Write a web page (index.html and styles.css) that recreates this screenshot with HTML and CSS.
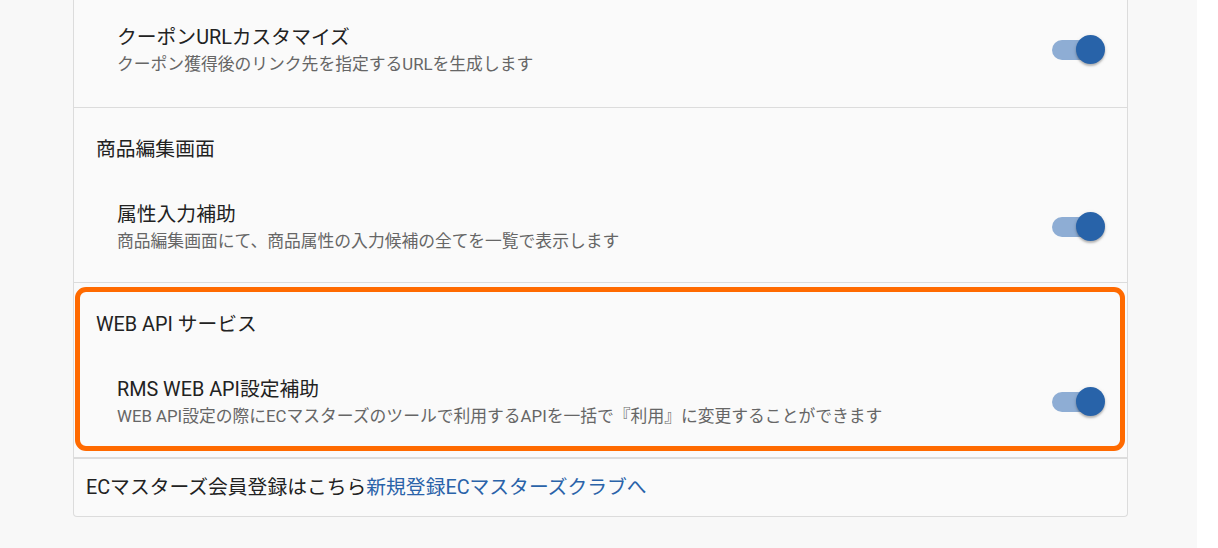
FILE: index.html
```html
<!DOCTYPE html>
<html lang="ja">
<head>
<meta charset="utf-8">
<title>設定</title>
<link rel="stylesheet" href="styles.css">
</head>
<body>
<div class="page">
  <main class="main">
    <div class="card">
      <section class="section section-first">
        <div class="item">
          <div class="item-text">
            <div class="item-title">クーポンURLカスタマイズ</div>
            <div class="item-desc">クーポン獲得後のリンク先を指定するURLを生成します</div>
          </div>
          <span class="toggle"><span class="track"></span><span class="knob"></span></span>
        </div>
      </section>
      <section class="section">
        <h2 class="section-title">商品編集画面</h2>
        <div class="item">
          <div class="item-text">
            <div class="item-title">属性入力補助</div>
            <div class="item-desc">商品編集画面にて、商品属性の入力候補の全てを一覧で表示します</div>
          </div>
          <span class="toggle"><span class="track"></span><span class="knob"></span></span>
        </div>
      </section>
      <section class="section highlight">
        <h2 class="section-title">WEB API サービス</h2>
        <div class="item">
          <div class="item-text">
            <div class="item-title">RMS WEB API設定補助</div>
            <div class="item-desc">WEB API設定の際にECマスターズのツールで利用するAPIを一括で『利用』に変更することができます</div>
          </div>
          <span class="toggle"><span class="track"></span><span class="knob"></span></span>
        </div>
      </section>
      <footer class="card-footer">ECマスターズ会員登録はこちら<a class="link" href="#">新規登録ECマスターズクラブへ</a></footer>
    </div>
  </main>
  <div class="gutter"></div>
</div>
</body>
</html>
```

FILE: styles.css
```css
html, body {
  margin: 0;
  padding: 0;
}
body {
  font-family: Roboto, "Noto Sans CJK JP", sans-serif;
  color: #222;
  background: #ffffff;
}
.page {
  display: flex;
  height: 548px;
  overflow: hidden;
}
.main {
  flex: 1;
  background: #f8f8f8;
  padding-left: 73px;
  padding-right: 69px;
}
.gutter {
  width: 21px;
  background: #ffffff;
}
.card {
  background: #fafafa;
  border: 1px solid #dcdcdc;
  border-top: none;
  border-radius: 0 0 4px 4px;
}
.section {
  position: relative;
  padding: 27px 0 29px;
  border-top: 1px solid #dcdcdc;
}
.section-first {
  border-top: none;
  padding-top: 23px;
  padding-bottom: 31px;
}
.section-title {
  margin: 0 0 36px;
  padding-left: 22px;
  font-size: 19.8px;
  line-height: 29px;
  font-weight: 400;
  color: #222;
}
.item {
  display: flex;
  align-items: center;
  justify-content: space-between;
  padding-left: 43px;
  padding-right: 22px;
}
.item-title {
  font-size: 19.8px;
  line-height: 29px;
  color: #222;
}
.item-desc {
  font-size: 16.8px;
  line-height: 24px;
  color: #666;
}
.toggle {
  position: relative;
  display: block;
  width: 53px;
  height: 29px;
  flex: none;
}
.track {
  position: absolute;
  left: 0;
  top: 4.5px;
  width: 48px;
  height: 20px;
  border-radius: 10px;
  background: #8eadd4;
}
.knob {
  position: absolute;
  right: 0;
  top: 0;
  width: 29px;
  height: 29px;
  border-radius: 50%;
  background: #2863a9;
  box-shadow: 0 2px 2px rgba(0, 0, 0, 0.22), 0 1px 4px rgba(0, 0, 0, 0.12);
}
.highlight::after {
  content: "";
  position: absolute;
  top: 4px;
  bottom: 6px;
  left: 1px;
  right: 2px;
  border: 5px solid #ff6a00;
  border-radius: 11px;
  pointer-events: none;
}
.card-footer {
  border-top: 2px solid #dcdcdc;
  padding: 14px 12px;
  font-size: 19.8px;
  line-height: 29px;
  color: #222;
}
.link {
  color: #2a63a9;
  text-decoration: none;
}
```
